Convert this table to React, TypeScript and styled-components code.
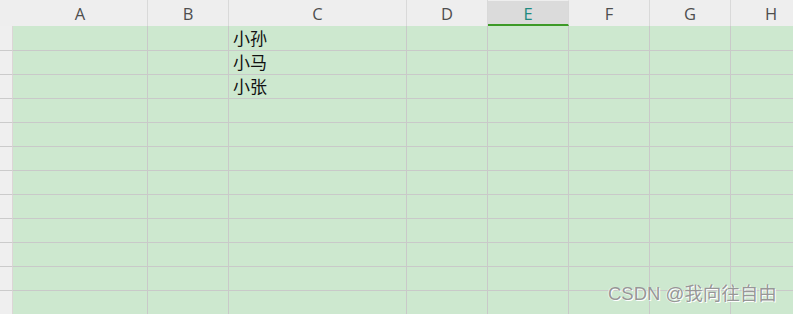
import React from "react";
import styled, { createGlobalStyle } from "styled-components";

const Global = createGlobalStyle`
  html, body { margin: 0; padding: 0; background: #ffffff; }
  body { width: 793px; height: 314px; overflow: hidden; }
`;

const Sheet = styled.div`
  position: relative;
  width: 793px;
  height: 314px;
  overflow: hidden;
  background: #cde8cf;
`;

const Grid = styled.div`
  display: grid;
  grid-template-columns: 13px 135px 81px 178px 81px 81px 81px 81px 81px;
  grid-template-rows: 26px 25px repeat(11, 24px);
  width: 812px;
`;

const ColHead = styled.div<{ $sel?: boolean }>`
  box-sizing: border-box;
  background: ${(p) => (p.$sel ? "#dbdbdb" : "#eeeeee")};
  border-right: 1px solid #d9d9d9;
  border-top: ${(p) => (p.$sel ? "1px solid #eeeeee" : "0")};
  border-bottom: ${(p) => (p.$sel ? "2px solid #3d9a27" : "0")};
  display: flex;
  align-items: center;
  justify-content: center;
  padding-top: ${(p) => (p.$sel ? "1px" : "0")};
  font-family: "Open Sans", "Noto Sans", sans-serif;
  font-size: 16.5px;
  color: ${(p) => (p.$sel ? "#1f8a80" : "#4e4e4e")};
`;

const Corner = styled.div`
  box-sizing: border-box;
  background: #eeeeee;
`;

const RowHead = styled.div`
  box-sizing: border-box;
  background: #efefef;
  border-right: 1px solid #dcd6d6;
  border-bottom: 1px solid #cbcbcb;
`;

const Cell = styled.div`
  box-sizing: border-box;
  background: #cde8cf;
  border-right: 1px solid #c9c9c9;
  border-bottom: 1px solid #c9c9c9;
  display: flex;
  align-items: flex-end;
  padding: 0 0 2px 4px;
  font-family: "Noto Sans CJK SC", "Noto Serif CJK SC", serif;
  font-size: 17px;
  line-height: 20px;
  color: #111111;
  white-space: nowrap;
`;

const Watermark = styled.div`
  position: absolute;
  left: 608px;
  top: 282px;
  font-family: "Liberation Sans", "Noto Sans CJK SC", sans-serif;
  font-size: 18.5px;
  line-height: 24px;
  color: #979797;
  text-shadow: 1px 1px 0 #ffffff, -1px 0 0 rgba(255, 255, 255, 0.6);
  white-space: nowrap;
`;

const cols = ["A", "B", "C", "D", "E", "F", "G", "H"];
const names: Record<number, string> = { 0: "小孙", 1: "小马", 2: "小张" };

export default function App() {
  const rows = Array.from({ length: 12 }, (_, i) => i);
  return (
    <>
      <Global />
      <Sheet>
        <Grid>
          <Corner />
          {cols.map((c) => (
            <ColHead key={c} $sel={c === "E"}>
              {c}
            </ColHead>
          ))}
          {rows.map((r) => (
            <React.Fragment key={r}>
              <RowHead />
              {cols.map((c) => (
                <Cell key={c}>{c === "C" ? names[r] ?? "" : ""}</Cell>
              ))}
            </React.Fragment>
          ))}
        </Grid>
        <Watermark>CSDN @我向往自由</Watermark>
      </Sheet>
    </>
  );
}
